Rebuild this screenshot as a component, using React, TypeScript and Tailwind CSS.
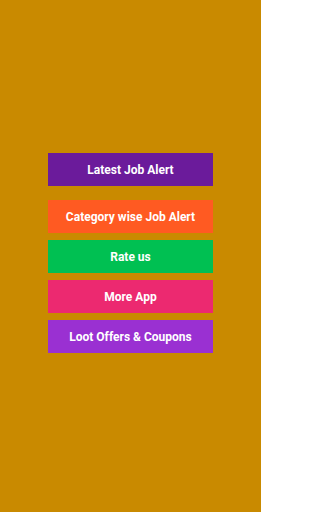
import React from "react";

const items = [
  { label: "Latest Job Alert", cls: "bg-[#6B1B9B]" },
  { label: "Category wise Job Alert", cls: "bg-[#FF5A22] mt-[14px]" },
  { label: "Rate us", cls: "bg-[#00C052] mt-[7px]" },
  { label: "More App", cls: "bg-[#EC2970] mt-[7px]" },
  { label: "Loot Offers & Coupons", cls: "bg-[#9A30D2] mt-[7px]" },
];

export default function App() {
  return (
    <div className="w-[261px] h-[512px] bg-[#C98A00] flex flex-col pt-[153px] pl-[48px]" style={{ fontFamily: "Roboto, 'Liberation Sans', sans-serif" }}>
      {items.map((it) => (
        <button
          key={it.label}
          className={`w-[165px] h-[33px] flex items-center justify-center text-white text-[12px] font-bold ${it.cls}`}
        >
          {it.label}
        </button>
      ))}
    </div>
  );
}
